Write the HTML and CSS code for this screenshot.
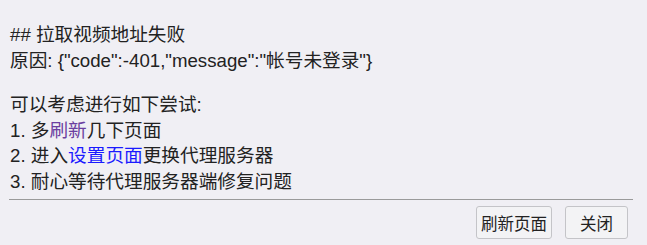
FILE: index.html
```html
<!DOCTYPE html>
<html lang="zh-CN">
  <head>
    <meta charset="UTF-8" />
    <title>拉取视频地址失败</title>
    <link rel="stylesheet" href="styles.css">
  </head>
  <body>
    <div class="dialog">
      <div class="message">
        <p>## 拉取视频地址失败<br>原因: {"code":-401,"message":"帐号未登录"}</p>
        <p>
          可以考虑进行如下尝试:<br>
          1. 多<a href="#" class="visited">刷新</a>几下页面<br>
          2. 进入<a href="#">设置页面</a>更换代理服务器<br>
          3. 耐心等待代理服务器端修复问题
        </p>
      </div>
      <hr>
      <div class="actions">
        <button>刷新页面</button>
        <button>关闭</button>
      </div>
    </div>
  </body>
</html>
```

FILE: styles.css
```css
body {
  margin: 0;
  background-color: #f0eff4;
  font-family: "Liberation Sans", "Noto Sans CJK SC", sans-serif;
  color: #222;
}

.dialog {
  padding: 22px 14px 0 9px;
}

.message {
  padding-left: 1px;
}

.message p {
  margin: 0 0 19px;
  font-size: 18.67px;
  line-height: 25.5px;
}

.message a {
  color: #1a1aff;
  text-decoration: none;
}

.message a.visited {
  color: #6b3fa0;
}

hr {
  border: none;
  border-top: 1px solid #9a9a9a;
  margin: -14px 0 0;
}

.actions {
  display: flex;
  justify-content: flex-end;
  gap: 13px;
  padding: 6px 5px 0 0;
}

button {
  font-family: inherit;
  font-size: 16.5px;
  color: #222;
  background-color: #f3f3f5;
  border: 1px solid #c4c4c8;
  border-radius: 3px;
  padding: 0 4px;
  height: 33px;
  min-width: 63px;
}
```
